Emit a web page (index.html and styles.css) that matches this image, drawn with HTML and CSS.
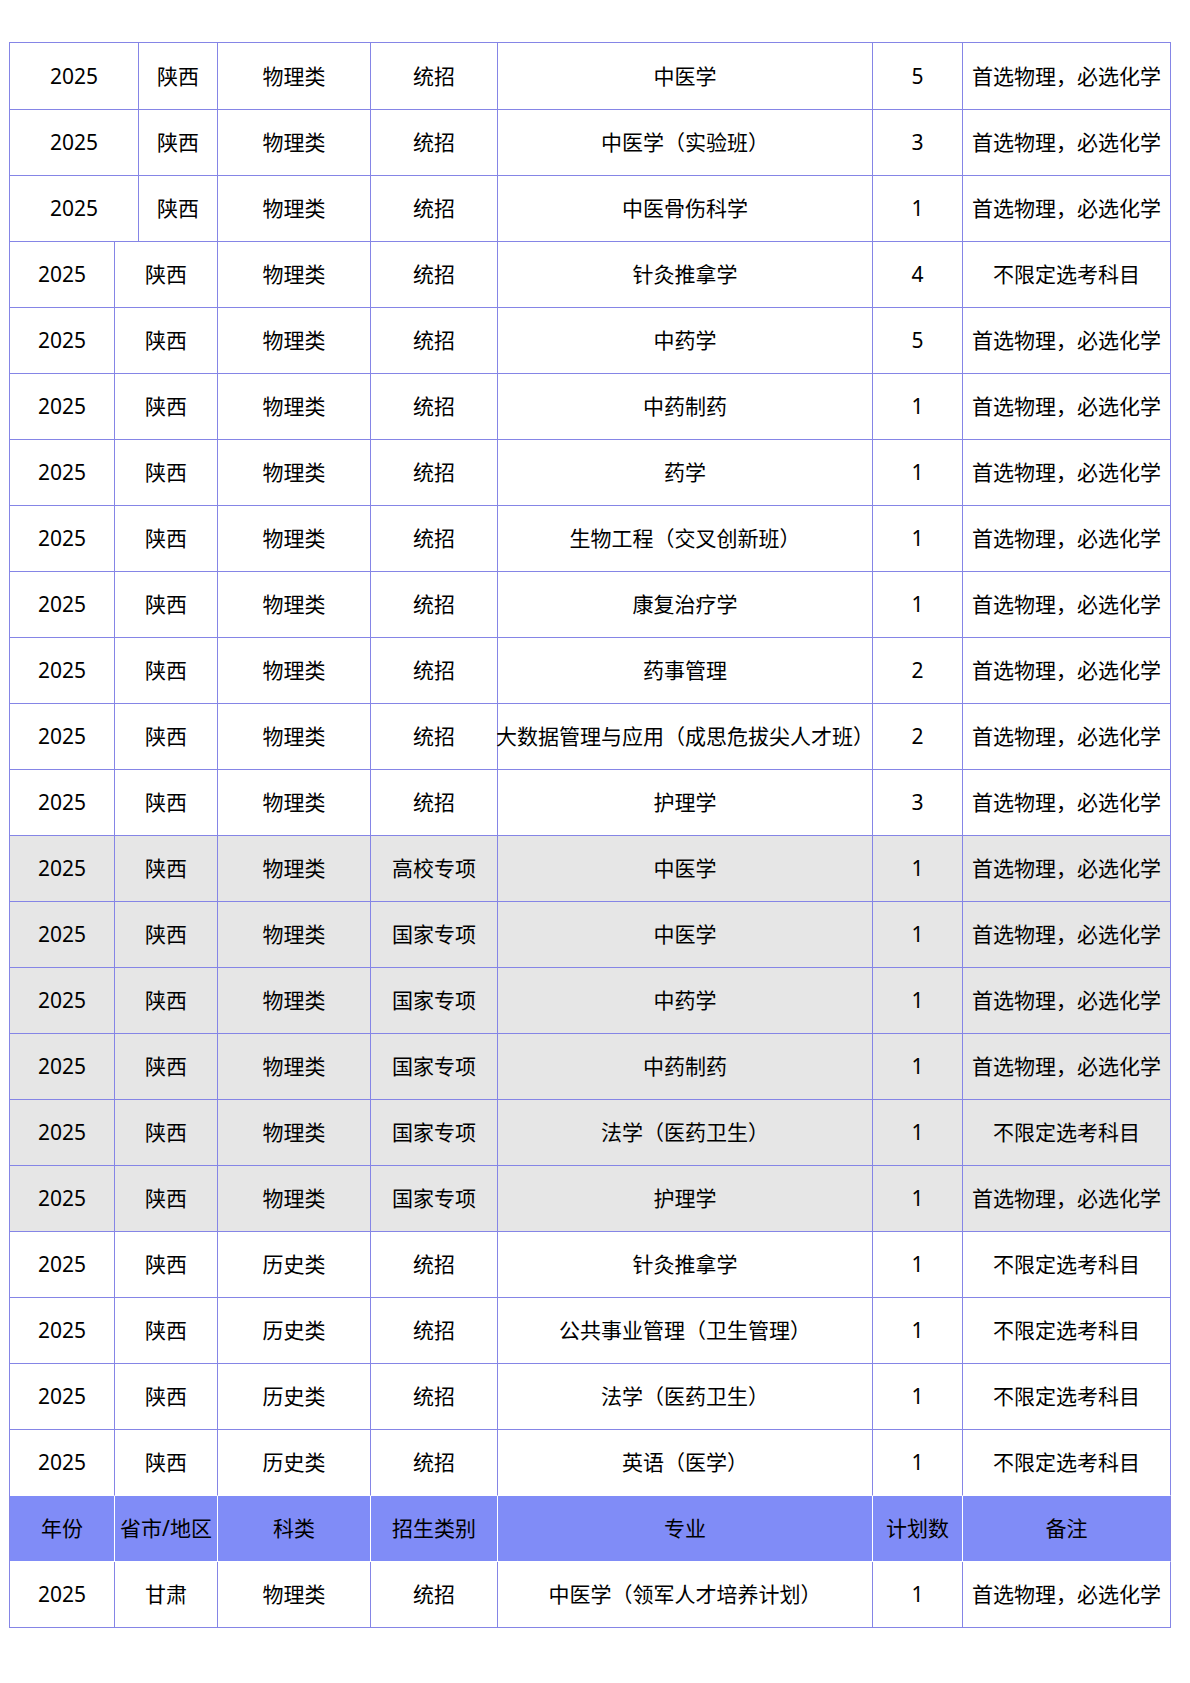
FILE: index.html
```html
<!DOCTYPE html>
<html lang="zh-CN">
<head>
<meta charset="utf-8">
<title>招生计划</title>
<link rel="stylesheet" href="styles.css">
</head>
<body>
<div class="sheet">
  <div class="row wide first"><div class="c">2025</div><div class="c">陕西</div><div class="c">物理类</div><div class="c">统招</div><div class="c">中医学</div><div class="c">5</div><div class="c">首选物理，必选化学</div></div>
  <div class="row wide"><div class="c">2025</div><div class="c">陕西</div><div class="c">物理类</div><div class="c">统招</div><div class="c">中医学（实验班）</div><div class="c">3</div><div class="c">首选物理，必选化学</div></div>
  <div class="row wide"><div class="c">2025</div><div class="c">陕西</div><div class="c">物理类</div><div class="c">统招</div><div class="c">中医骨伤科学</div><div class="c">1</div><div class="c">首选物理，必选化学</div></div>
  <div class="row"><div class="c">2025</div><div class="c">陕西</div><div class="c">物理类</div><div class="c">统招</div><div class="c">针灸推拿学</div><div class="c">4</div><div class="c">不限定选考科目</div></div>
  <div class="row"><div class="c">2025</div><div class="c">陕西</div><div class="c">物理类</div><div class="c">统招</div><div class="c">中药学</div><div class="c">5</div><div class="c">首选物理，必选化学</div></div>
  <div class="row"><div class="c">2025</div><div class="c">陕西</div><div class="c">物理类</div><div class="c">统招</div><div class="c">中药制药</div><div class="c">1</div><div class="c">首选物理，必选化学</div></div>
  <div class="row"><div class="c">2025</div><div class="c">陕西</div><div class="c">物理类</div><div class="c">统招</div><div class="c">药学</div><div class="c">1</div><div class="c">首选物理，必选化学</div></div>
  <div class="row"><div class="c">2025</div><div class="c">陕西</div><div class="c">物理类</div><div class="c">统招</div><div class="c">生物工程（交叉创新班）</div><div class="c">1</div><div class="c">首选物理，必选化学</div></div>
  <div class="row"><div class="c">2025</div><div class="c">陕西</div><div class="c">物理类</div><div class="c">统招</div><div class="c">康复治疗学</div><div class="c">1</div><div class="c">首选物理，必选化学</div></div>
  <div class="row"><div class="c">2025</div><div class="c">陕西</div><div class="c">物理类</div><div class="c">统招</div><div class="c">药事管理</div><div class="c">2</div><div class="c">首选物理，必选化学</div></div>
  <div class="row"><div class="c">2025</div><div class="c">陕西</div><div class="c">物理类</div><div class="c">统招</div><div class="c">大数据管理与应用（成思危拔尖人才班）</div><div class="c">2</div><div class="c">首选物理，必选化学</div></div>
  <div class="row"><div class="c">2025</div><div class="c">陕西</div><div class="c">物理类</div><div class="c">统招</div><div class="c">护理学</div><div class="c">3</div><div class="c">首选物理，必选化学</div></div>
  <div class="row gray"><div class="c">2025</div><div class="c">陕西</div><div class="c">物理类</div><div class="c">高校专项</div><div class="c">中医学</div><div class="c">1</div><div class="c">首选物理，必选化学</div></div>
  <div class="row gray"><div class="c">2025</div><div class="c">陕西</div><div class="c">物理类</div><div class="c">国家专项</div><div class="c">中医学</div><div class="c">1</div><div class="c">首选物理，必选化学</div></div>
  <div class="row gray"><div class="c">2025</div><div class="c">陕西</div><div class="c">物理类</div><div class="c">国家专项</div><div class="c">中药学</div><div class="c">1</div><div class="c">首选物理，必选化学</div></div>
  <div class="row gray"><div class="c">2025</div><div class="c">陕西</div><div class="c">物理类</div><div class="c">国家专项</div><div class="c">中药制药</div><div class="c">1</div><div class="c">首选物理，必选化学</div></div>
  <div class="row gray"><div class="c">2025</div><div class="c">陕西</div><div class="c">物理类</div><div class="c">国家专项</div><div class="c">法学（医药卫生）</div><div class="c">1</div><div class="c">不限定选考科目</div></div>
  <div class="row gray"><div class="c">2025</div><div class="c">陕西</div><div class="c">物理类</div><div class="c">国家专项</div><div class="c">护理学</div><div class="c">1</div><div class="c">首选物理，必选化学</div></div>
  <div class="row"><div class="c">2025</div><div class="c">陕西</div><div class="c">历史类</div><div class="c">统招</div><div class="c">针灸推拿学</div><div class="c">1</div><div class="c">不限定选考科目</div></div>
  <div class="row"><div class="c">2025</div><div class="c">陕西</div><div class="c">历史类</div><div class="c">统招</div><div class="c">公共事业管理（卫生管理）</div><div class="c">1</div><div class="c">不限定选考科目</div></div>
  <div class="row"><div class="c">2025</div><div class="c">陕西</div><div class="c">历史类</div><div class="c">统招</div><div class="c">法学（医药卫生）</div><div class="c">1</div><div class="c">不限定选考科目</div></div>
  <div class="row before-head"><div class="c">2025</div><div class="c">陕西</div><div class="c">历史类</div><div class="c">统招</div><div class="c">英语（医学）</div><div class="c">1</div><div class="c">不限定选考科目</div></div>
  <div class="row head"><div class="c">年份</div><div class="c">省市/地区</div><div class="c">科类</div><div class="c">招生类别</div><div class="c">专业</div><div class="c">计划数</div><div class="c">备注</div></div>
  <div class="row"><div class="c">2025</div><div class="c">甘肃</div><div class="c">物理类</div><div class="c">统招</div><div class="c">中医学（领军人才培养计划）</div><div class="c">1</div><div class="c">首选物理，必选化学</div></div>
</div>
</body>
</html>
```

FILE: styles.css
```css
html, body {
  margin: 0;
  padding: 0;
  background: #ffffff;
}

body {
  font-family: "Noto Sans", "Noto Sans CJK SC", sans-serif;
  font-size: 21px;
  color: #000000;
}

.sheet {
  margin: 42px 0 0 9px;
  width: 1162px;
  box-sizing: border-box;
  border-left: 1px solid #8585e6;
  border-top: 1px solid #8585e6;
}

.row {
  display: grid;
  grid-template-columns: 105px 103px 153px 127px 375px 90px 208px;
  height: 66px;
}

.row.wide {
  grid-template-columns: 129px 79px 153px 127px 375px 90px 208px;
}

.row.first {
  height: 67px;
}

.c {
  box-sizing: border-box;
  height: 100%;
  border-right: 1px solid #8585e6;
  border-bottom: 1px solid #8585e6;
  display: flex;
  align-items: center;
  justify-content: center;
  white-space: nowrap;
  line-height: 1;
}

.gray .c {
  background: #e6e6e6;
}

.before-head .c {
  border-bottom-color: #ffffff;
}

.head .c {
  background: #808cf7;
  border-right-color: #ffffff;
  border-bottom-color: #ffffff;
}

.head .c:last-child {
  border-right-color: #8585e6;
}
```
